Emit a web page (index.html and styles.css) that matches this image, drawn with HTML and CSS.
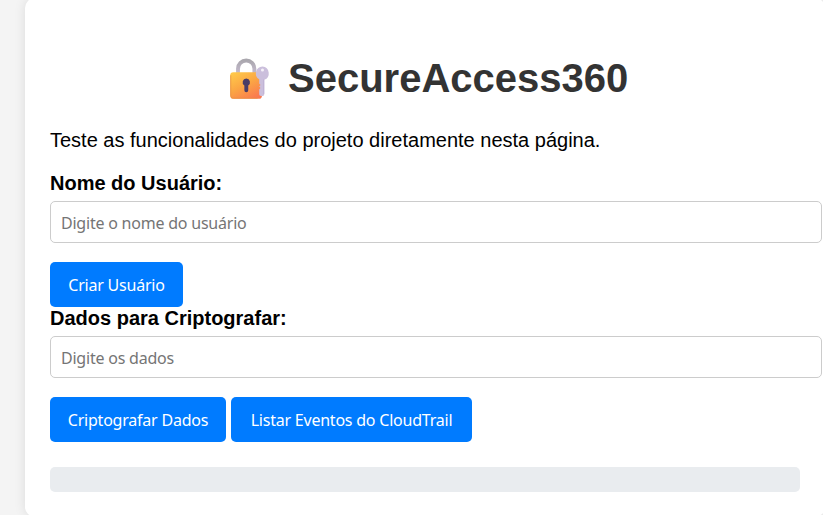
FILE: index.html
```
<!DOCTYPE html>
<html lang="pt-BR">
<head>
<meta charset="utf-8">
<title>SecureAccess360</title>
<link rel="stylesheet" href="styles.css">
</head>
<body>
<main class="container">
  <h1 class="title">
    <svg class="lock" viewBox="0 0 42 42" aria-hidden="true">
      <defs>
        <linearGradient id="body" x1="0.1" y1="0" x2="0.75" y2="1">
          <stop offset="0" stop-color="#ffca4b"/>
          <stop offset="0.5" stop-color="#fba644"/>
          <stop offset="1" stop-color="#fa7950"/>
        </linearGradient>
        <linearGradient id="shackle" x1="0" y1="0" x2="0" y2="1">
          <stop offset="0" stop-color="#aaa7ae"/>
          <stop offset="1" stop-color="#c8bdd2"/>
        </linearGradient>
      </defs>
      <path d="M8.800 16V10.500a8 8 0 0 1 16 0V16" fill="none" stroke="url(#shackle)" stroke-width="3.800"/>
      <rect x="1.200" y="13.800" width="31" height="26" rx="3" fill="url(#body)"/>
      <path d="M1.700 17v19.500q0 2.800 2.800 2.800H28" fill="none" stroke="#e99345" stroke-width="0.800"/>
      <path d="M16.900 20a3.700 3.700 0 0 0-1.900 6.800V31.500a1.900 1.900 0 0 0 3.800 0V26.800A3.700 3.700 0 0 0 16.900 20z" fill="#493c66"/>
      <path d="M32.700 8.200a6.800 6.800 0 0 0-3.200 12.600V25l1.300 1.300-1.300 1.300 1.200 1.700-1.200 1.500V35.500q0 1.500 1.800 1.500h1.400q1.800 0 1.800-1.800V21.300A6.800 6.800 0 0 0 32.700 8.200z" fill="#cbbfdc"/>
      <circle cx="32.700" cy="11.800" r="1.500" fill="#f5f1f8"/>
      <path d="M33.900 21V35" stroke="#bcaed0" stroke-width="0.800"/>
    </svg>
    <span>SecureAccess360</span>
  </h1>
  <p class="intro">Teste as funcionalidades do projeto diretamente nesta página.</p>

  <label class="label" for="username">Nome do Usuário:</label>
  <input class="field" id="username" type="text" placeholder="Digite o nome do usuário">
  <div class="actions">
    <button class="btn btn-create" type="button">Criar Usuário</button>
  </div>

  <label class="label" for="data">Dados para Criptografar:</label>
  <input class="field" id="data" type="text" placeholder="Digite os dados">
  <div class="actions">
    <button class="btn btn-encrypt" type="button">Criptografar Dados</button>
    <button class="btn btn-list" type="button">Listar Eventos do CloudTrail</button>
  </div>

  <div class="output"></div>
</main>
</body>
</html>
```
FILE: styles.css
```
html {
  overflow: hidden;
}

body {
  margin: 0;
  background: #f4f4f4;
  color: #000;
  font-family: "Liberation Sans", Arial, sans-serif;
  font-size: 20px;
  line-height: 23px;
}

.container {
  box-sizing: content-box;
  width: 750px;
  margin: -2px 0 0 25px;
  padding: 25px;
  border-radius: 10px;
  background: #fff;
  box-shadow: 0 0 12px rgba(0, 0, 0, 0.1);
}

.title {
  display: flex;
  align-items: center;
  height: 46px;
  margin: 32px 0 28px 179px;
  color: #333;
  font-size: 40px;
  line-height: 46px;
  white-space: nowrap;
}

.lock {
  flex: none;
  width: 43px;
  height: 43px;
  margin: 2px 16px 0 0;
}

.intro {
  margin: 0 0 20px;
}

.label {
  display: block;
  font-weight: bold;
}

.field {
  display: block;
  box-sizing: border-box;
  width: 772px;
  height: 42px;
  margin: 6px 0 19px;
  padding: 2px 10px 0;
  border: 1px solid #ccc;
  border-radius: 5px;
  background: #fff;
}

.field,
.btn {
  font-family: "Noto Sans", "Open Sans", sans-serif;
  font-size: 16px;
  letter-spacing: -0.22px;
}

.field::placeholder {
  color: #757575;
}

.actions {
  display: flex;
  gap: 5px;
}

.btn {
  height: 45px;
  padding: 0;
  border: 0;
  border-radius: 5px;
  background: #007bff;
  color: #fff;
  white-space: nowrap;
}

.btn-create {
  width: 133px;
}

.btn-encrypt {
  width: 176px;
}

.btn-list {
  width: 241px;
}

.output {
  height: 25px;
  margin-top: 25px;
  border-radius: 5px;
  background: #e9ecef;
}
```
